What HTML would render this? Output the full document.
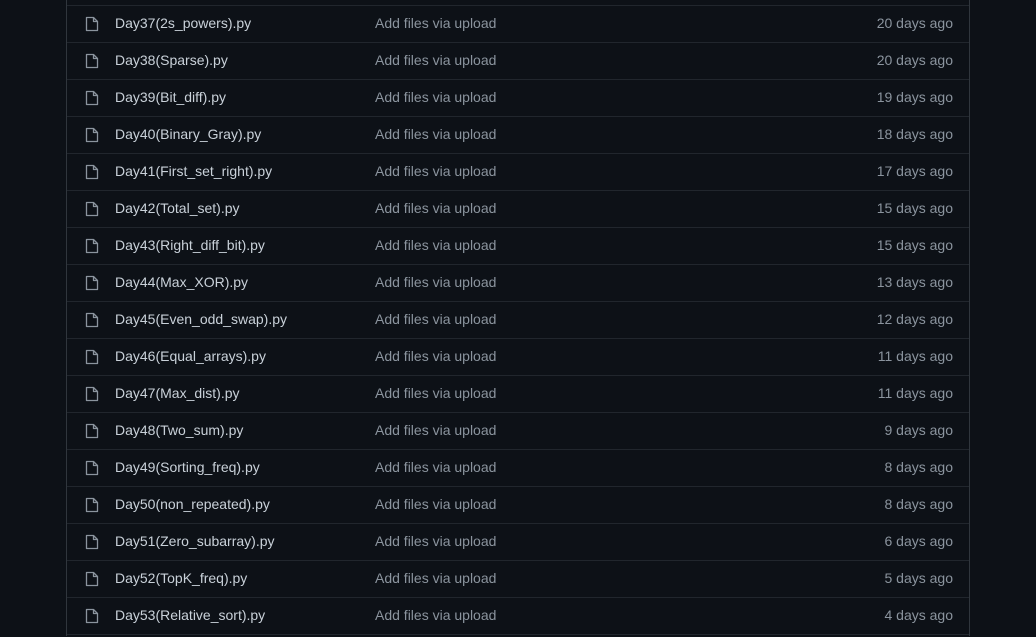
<!DOCTYPE html>
<html style="height:637px;overflow:hidden;background:#0d1117"><head><style>
body{margin:0;background:#0d1117;width:1036px;height:637px;overflow:hidden;font-family:"Liberation Sans",sans-serif;font-size:14px;position:relative}
.box{position:absolute;left:66px;top:-10px;width:902px;height:646px;border:1px solid #30363d;border-top:none;border-bottom:none;box-sizing:content-box}
.r{position:absolute;left:67px;width:902px;height:36px;border-top:1px solid #21262d}
.r svg{position:absolute;left:18px;top:10px}
.n{position:absolute;left:48px;top:9px;color:#c9d1d9}
.m{position:absolute;left:308px;top:9px;color:#8b949e}
.d{position:absolute;right:16px;top:9px;color:#8b949e}
</style></head><body>
<div class="box"></div>
<div id="rows"></div>
<script>
var d=[["Day37(2s_powers).py","20"],["Day38(Sparse).py","20"],["Day39(Bit_diff).py","19"],["Day40(Binary_Gray).py","18"],["Day41(First_set_right).py","17"],["Day42(Total_set).py","15"],["Day43(Right_diff_bit).py","15"],["Day44(Max_XOR).py","13"],["Day45(Even_odd_swap).py","12"],["Day46(Equal_arrays).py","11"],["Day47(Max_dist).py","11"],["Day48(Two_sum).py","9"],["Day49(Sorting_freq).py","8"],["Day50(non_repeated).py","8"],["Day51(Zero_subarray).py","6"],["Day52(TopK_freq).py","5"],["Day53(Relative_sort).py","4"]];
var h="";
d.forEach(function(x,i){h+='<div class="r" style="top:'+(5+37*i)+'px"><svg width="14" height="16" viewBox="0 0 14 16"><path d="M1.5 1.5h7l4 4v9h-11z M8.5 1.5v4h4" fill="none" stroke="#8b949e" stroke-width="1.3" stroke-linejoin="round"/></svg><span class="n">'+x[0]+'</span><span class="m">Add files via upload</span><span class="d">'+x[1]+' days ago</span></div>';});
h+='<div class="r" style="top:634px;height:2px"></div>';
document.getElementById("rows").innerHTML=h;
</script>
</body></html>
